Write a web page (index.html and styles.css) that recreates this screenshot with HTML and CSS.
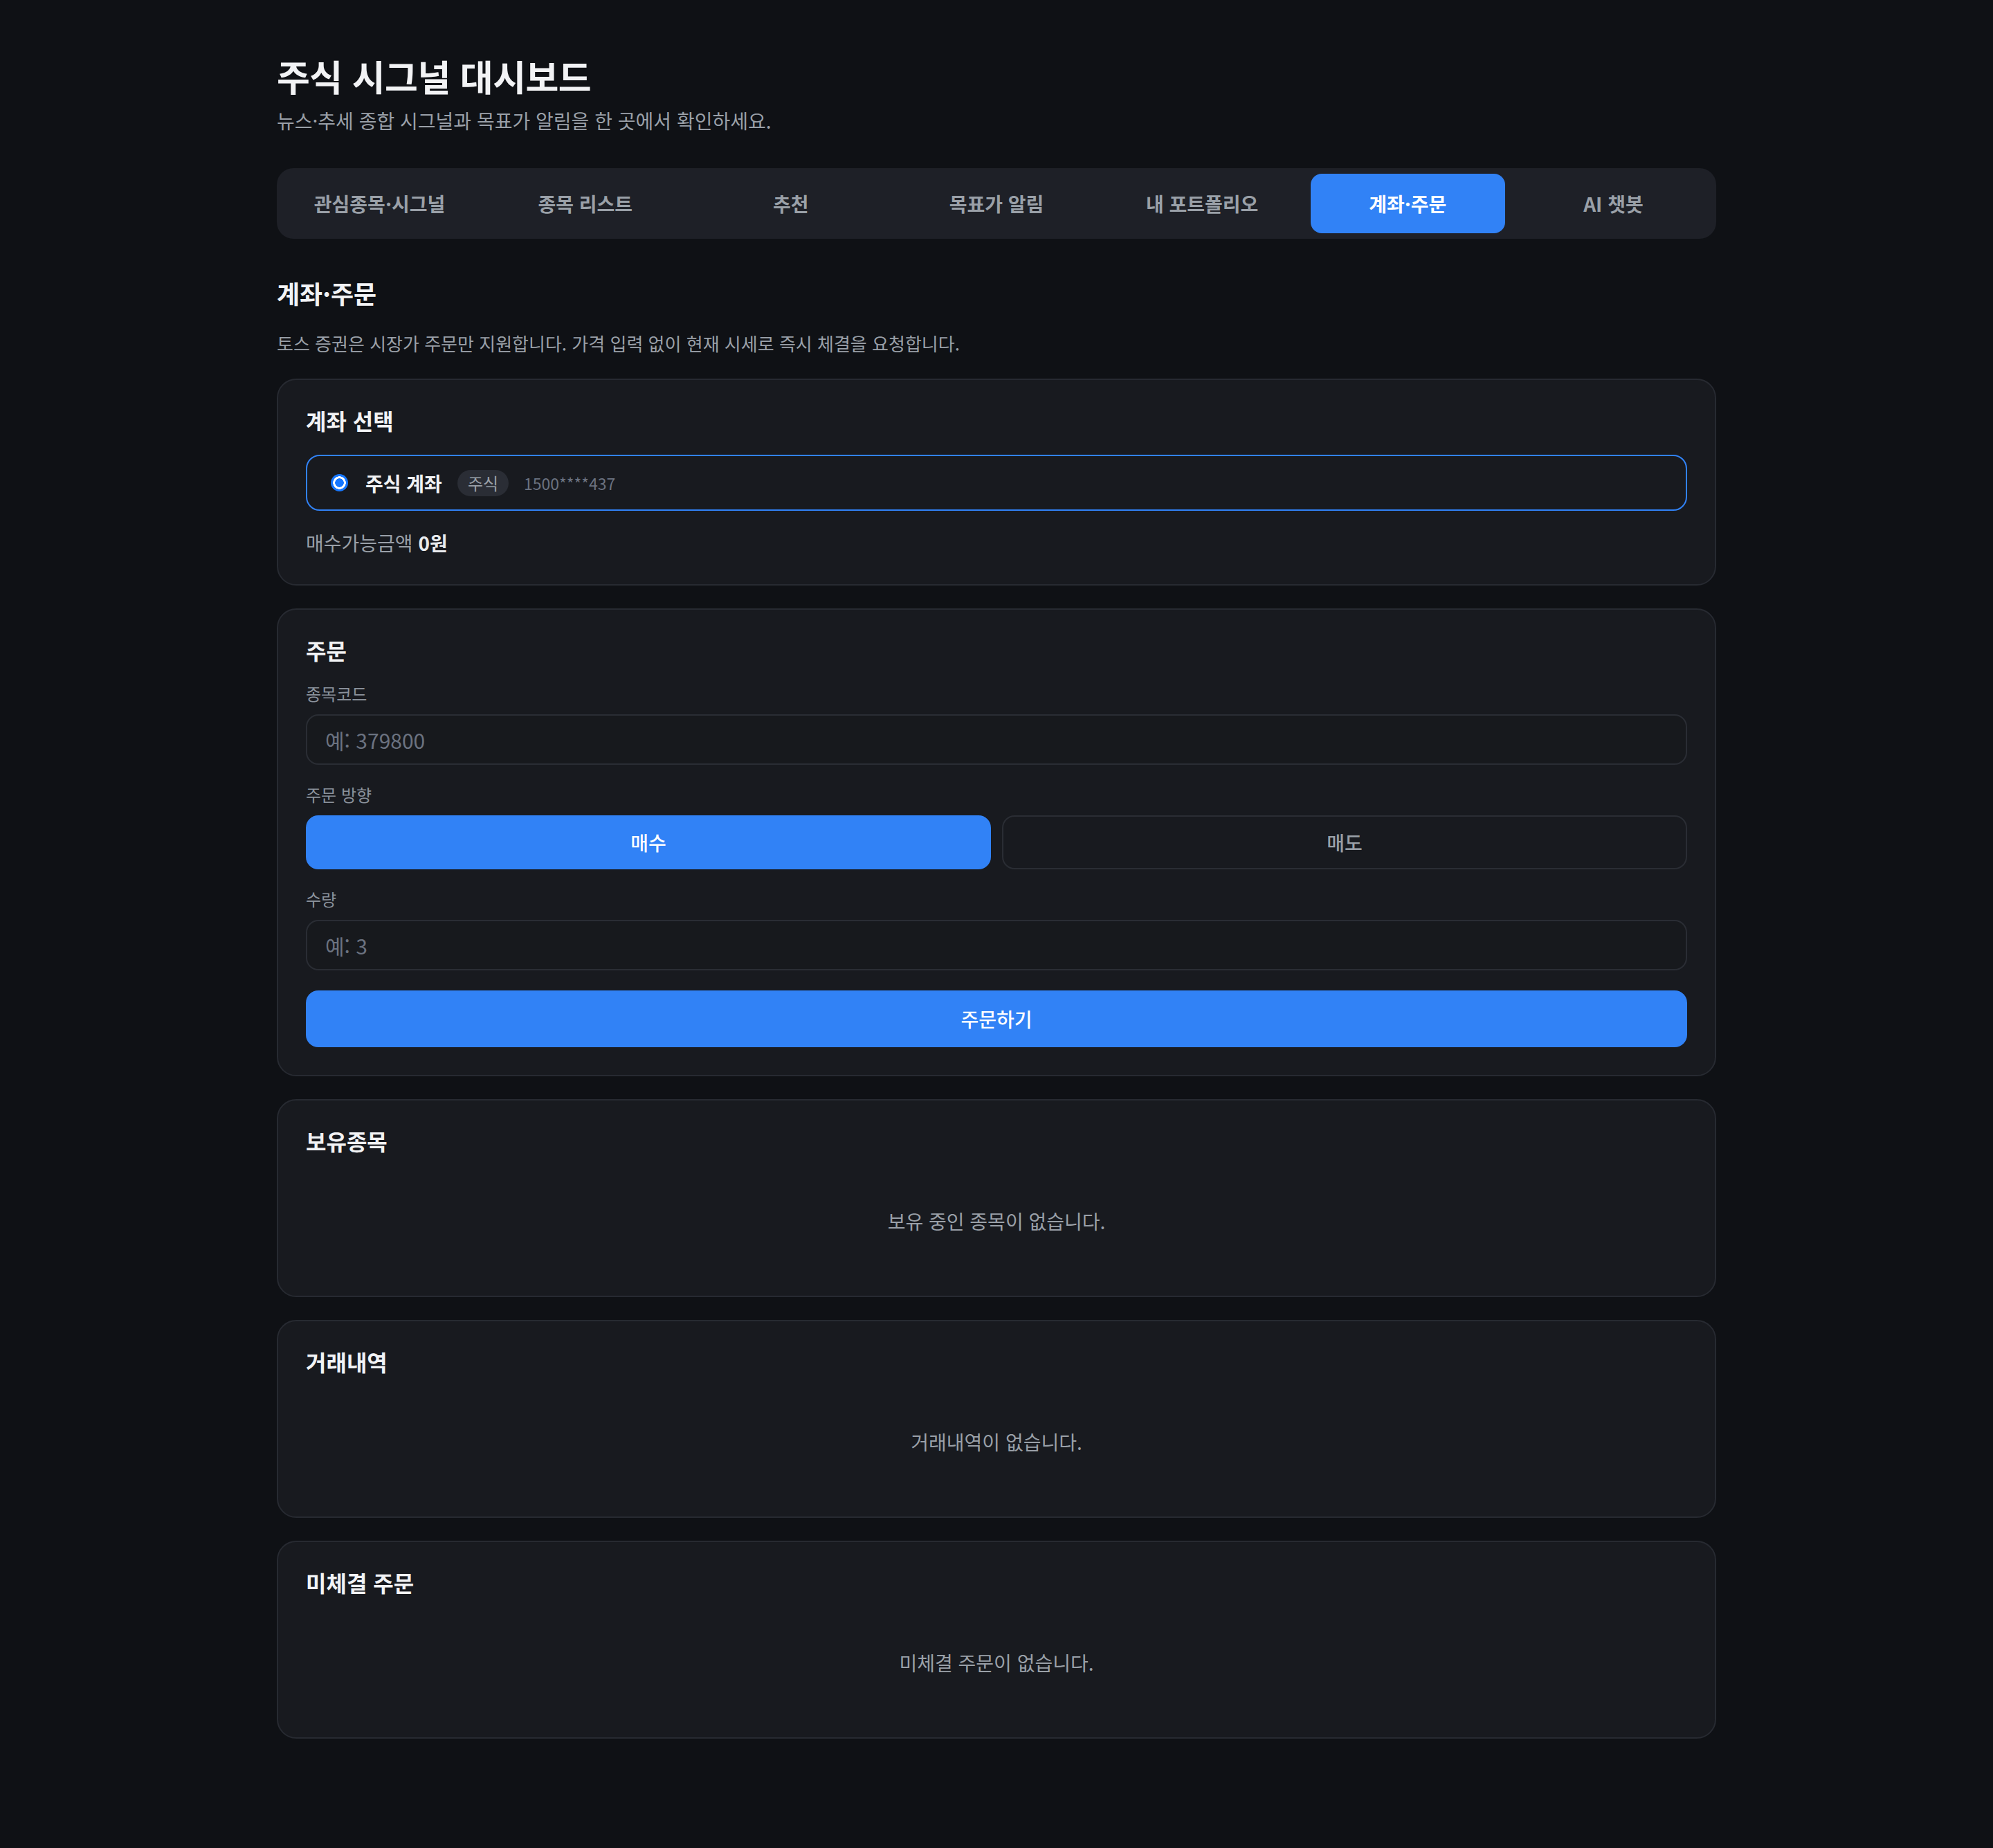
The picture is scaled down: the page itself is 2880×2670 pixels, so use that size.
FILE: index.html
```html
<!DOCTYPE html>
<html lang="ko">
  <head>
    <meta charset="UTF-8" />
    <meta name="viewport" content="width=device-width, initial-scale=1.0" />
    <title>주식 시그널 대시보드</title>
    <link rel="stylesheet" href="styles.css">
  </head>
  <body>
    <div class="container">
      <!-- Header -->
      <div class="header">
        <h1>주식 시그널 대시보드</h1>
        <p>뉴스·추세 종합 시그널과 목표가 알림을 한 곳에서 확인하세요.</p>
      </div>

      <!-- Tabs -->
      <div class="tabs">
        <button class="tab">관심종목·시그널</button>
        <button class="tab">종목 리스트</button>
        <button class="tab">추천</button>
        <button class="tab">목표가 알림</button>
        <button class="tab">내 포트폴리오</button>
        <button class="tab active">계좌·주문</button>
        <button class="tab">AI 챗봇</button>
      </div>

      <!-- Account / order section -->
      <div class="section-head">
        <h2>계좌·주문</h2>
        <p>토스 증권은 시장가 주문만 지원합니다. 가격 입력 없이 현재 시세로 즉시 체결을 요청합니다.</p>
      </div>

      <div class="card">
        <h3 class="card-title">계좌 선택</h3>
        <label class="account-option selected">
          <input type="radio" name="account" checked />
          <span class="account-name">주식 계좌</span>
          <span class="account-badge">주식</span>
          <span class="account-number">1500****437</span>
        </label>
        <div class="balance">매수가능금액 <strong>0원</strong></div>
      </div>

      <div class="card">
        <h3 class="card-title">주문</h3>

        <div class="field">
          <label class="field-label" for="symbol">종목코드</label>
          <input id="symbol" class="text-input" type="text" placeholder="예: 379800" />
        </div>

        <div class="field">
          <div class="field-label">주문 방향</div>
          <div class="side-toggle">
            <button class="side-btn active">매수</button>
            <button class="side-btn">매도</button>
          </div>
        </div>

        <div class="field">
          <label class="field-label" for="qty">수량</label>
          <input id="qty" class="text-input" type="text" placeholder="예: 3" />
        </div>

        <button class="submit-btn">주문하기</button>
      </div>

      <div class="card">
        <h3 class="card-title">보유종목</h3>
        <div class="empty">보유 중인 종목이 없습니다.</div>
      </div>

      <div class="card">
        <h3 class="card-title">거래내역</h3>
        <div class="empty">거래내역이 없습니다.</div>
      </div>

      <div class="card">
        <h3 class="card-title">미체결 주문</h3>
        <div class="empty">미체결 주문이 없습니다.</div>
      </div>
    </div>
  </body>
</html>
```

FILE: styles.css
```css
* {
  margin: 0;
  padding: 0;
  box-sizing: border-box;
}

body {
  font-family: "Noto Sans CJK KR", "Noto Sans", sans-serif;
  background-color: #0f1115;
  color: #e9ebee;
}

button,
input {
  font-family: inherit;
}

.container {
  width: 2080px;
  margin: 0 auto;
  padding: 76px 0 160px;
}

/* Header */
.header h1 {
  font-size: 52px;
  font-weight: 700;
  line-height: 68px;
  letter-spacing: -0.5px;
  color: #f2f3f5;
}

.header p {
  margin-top: 12px;
  font-size: 28px;
  line-height: 36px;
  color: #9aa0a8;
}

/* Tabs */
.tabs {
  display: flex;
  gap: 16px;
  margin-top: 51px;
  padding: 8px;
  background: #1e2027;
  border-radius: 24px;
}

.tab {
  flex: 1;
  height: 86px;
  border: none;
  border-radius: 16px;
  background: transparent;
  color: #9aa0a8;
  font-size: 28px;
  font-weight: 700;
  cursor: pointer;
}

.tab.active {
  background: #3182f6;
  color: #ffffff;
}

/* Section heading */
.section-head {
  margin-top: 54px;
}

.section-head h2 {
  font-size: 36px;
  font-weight: 700;
  line-height: 48px;
  color: #f2f3f5;
}

.section-head p {
  margin-top: 31px;
  font-size: 26px;
  line-height: 36px;
  color: #9aa0a8;
}

/* Cards */
.card {
  margin-top: 33px;
  padding: 36px 40px 40px;
  background: #181a1f;
  border: 2px solid #272a31;
  border-radius: 28px;
}

.card-title {
  font-size: 32px;
  font-weight: 700;
  line-height: 44px;
  color: #f2f3f5;
}

/* Account selection */
.account-option {
  display: flex;
  align-items: center;
  gap: 22px;
  height: 81px;
  margin-top: 28px;
  padding: 0 34px;
  border: 2px solid #3182f6;
  border-radius: 20px;
  cursor: pointer;
}

.account-option input {
  appearance: none;
  width: 25px;
  height: 25px;
  margin-right: 3px;
  border-radius: 50%;
  background: radial-gradient(circle, #1677ff 0 6px, #ffffff 6.5px 9px, #1677ff 9.5px);
}

.account-name {
  font-size: 28px;
  font-weight: 700;
  color: #f2f3f5;
}

.account-badge {
  display: inline-flex;
  align-items: center;
  height: 38px;
  padding: 0 15px;
  border-radius: 19px;
  background: #2a2d35;
  color: #9aa0a8;
  font-size: 24px;
}

.account-number {
  font-size: 23px;
  color: #6b7280;
}

.balance {
  margin-top: 26px;
  font-size: 28px;
  line-height: 40px;
  color: #9aa0a8;
}

.balance strong {
  color: #e9ebee;
  font-weight: 700;
}

/* Order form */
.card-title + .field {
  margin-top: 25px;
}

.field + .field {
  margin-top: 27px;
}

.field-label {
  display: block;
  margin-bottom: 14px;
  font-size: 24px;
  line-height: 32px;
  color: #8b929c;
}

.text-input {
  width: 100%;
  height: 73px;
  padding: 0 26px;
  background: #17191d;
  border: 2px solid #2a2d34;
  border-radius: 18px;
  color: #e9ebee;
  font-size: 30px;
  outline: none;
}

.text-input::placeholder {
  color: #6b7280;
}

.side-toggle {
  display: grid;
  grid-template-columns: 1fr 1fr;
  gap: 16px;
}

.side-btn {
  height: 78px;
  background: transparent;
  border: 2px solid #2a2d34;
  border-radius: 18px;
  color: #9aa0a8;
  font-size: 28px;
  font-weight: 500;
  cursor: pointer;
}

.side-btn.active {
  background: #3182f6;
  border-color: #3182f6;
  color: #ffffff;
}

.submit-btn {
  width: 100%;
  height: 82px;
  margin-top: 29px;
  background: #3182f6;
  border: none;
  border-radius: 18px;
  color: #ffffff;
  font-size: 28px;
  font-weight: 500;
  cursor: pointer;
}

/* Empty states */
.empty {
  padding: 76px 0 50px;
  text-align: center;
  font-size: 28px;
  line-height: 36px;
  color: #9aa0a8;
}
```
